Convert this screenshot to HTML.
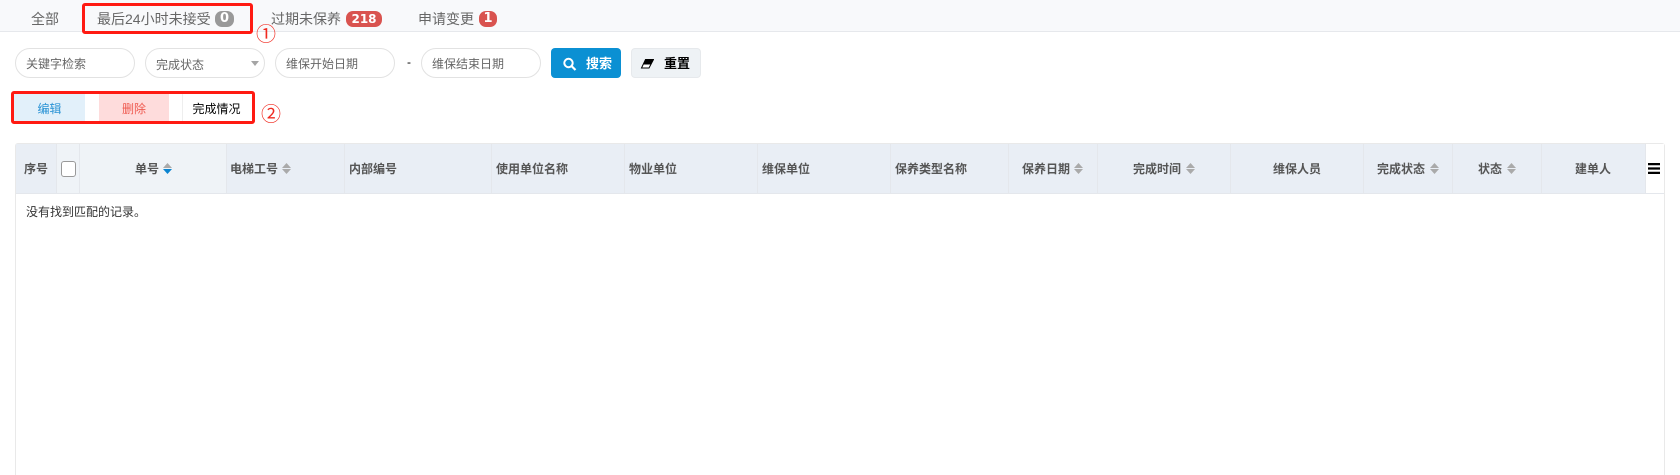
<!DOCTYPE html>
<html lang="zh">
<head>
<meta charset="utf-8">
<title>维保</title>
<style>
html,body{margin:0;padding:0;background:#fff;width:1680px;height:475px;overflow:hidden}
body{position:relative;font-family:"Liberation Sans","WenQuanYi Zen Hei","Noto Sans CJK SC",sans-serif;font-size:12px}
.a{position:absolute;white-space:nowrap}
.tabbar{left:0;top:0;width:1680px;height:31px;background:#f8f9fb;border-bottom:1px solid #e6e8ec}
.tab{font-size:14px;color:#666;line-height:20px;top:9px}
.badge{font-family:"DejaVu Sans",sans-serif;font-weight:bold;color:#fff;font-size:13px;line-height:16px;height:16px;border-radius:7px;text-align:center;top:11px}
.red{position:absolute;border:3px solid #ff1a12;border-radius:3px;box-sizing:border-box}
.circ{color:#f02a20;font-family:"Noto Sans CJK SC",sans-serif;font-size:20px;line-height:22px}
.inp{top:48px;width:120px;height:30px;box-sizing:border-box;border:1px solid #e2e2e2;border-radius:15px;background:#fff}
.ph{color:#666;font-size:12px;line-height:16px;top:56px}
.btn{top:48px;height:30px;box-sizing:border-box;border-radius:4px}
.ac{top:94px;height:27px;line-height:30px;text-align:center;font-size:12px}
.thead{left:16px;top:144px;width:1648px;height:49px;background:#e9eef5}
.tl{top:144px;width:1px;height:49px;background:#e4e7ec}
.th{top:161px;font-size:12px;line-height:16px;font-weight:bold;color:#555}
.s{width:9px;height:11px;top:163px}
</style>
</head>
<body>
<div class="a tabbar"></div>
<div class="a tab" style="left:31px">全部</div>
<div class="a tab" style="left:97px">最后24小时未接受</div>
<div class="a badge" style="left:215px;width:19px;background:#999">0</div>
<div class="a tab" style="left:271px">过期未保养</div>
<div class="a badge" style="left:346px;width:36px;background:#d9534f;font-size:12px">218</div>
<div class="a tab" style="left:418px">申请变更</div>
<div class="a badge" style="left:479px;width:18px;background:#d9534f">1</div>
<div class="red" style="left:82px;top:3px;width:171px;height:31px"></div>
<div class="a circ" style="left:256px;top:22px">①</div>

<div class="a inp" style="left:15px"></div>
<div class="a ph" style="left:26px">关键字检索</div>
<div class="a inp" style="left:145px"></div>
<div class="a ph" style="left:156px;top:57px">完成状态</div>
<div class="a" style="left:251px;top:61px;width:0;height:0;border-left:4px solid transparent;border-right:4px solid transparent;border-top:5px solid #a5a5a5"></div>
<div class="a inp" style="left:275px"></div>
<div class="a ph" style="left:286px">维保开始日期</div>
<div class="a" style="left:407px;top:54px;color:#000;font-size:12px;line-height:16px">-</div>
<div class="a inp" style="left:421px"></div>
<div class="a ph" style="left:432px">维保结束日期</div>

<div class="a btn" style="left:551px;width:70px;background:#0b90d3"></div>
<svg class="a" style="left:562px;top:57px" width="15" height="14" viewBox="0 0 15 14"><circle cx="6.500" cy="6" r="4.200" fill="none" stroke="#fff" stroke-width="2"/><path d="M9.500 9l4 4" stroke="#fff" stroke-width="2.200" fill="none"/></svg>
<div class="a" style="left:586px;top:55px;color:#fff;font-size:13px;line-height:17px;font-weight:bold">搜索</div>
<div class="a btn" style="left:631px;width:70px;background:#eef2f5;border:1px solid #e6e9ec"></div>
<svg class="a" style="left:640px;top:59px" width="14" height="10" viewBox="0 0 14 10"><path d="M5.500 .5h8L9 9H1.500z" fill="#fff" stroke="#000" stroke-width="1"/><path d="M5.500 .5h8L10.800 5.500H3.500z" fill="#000"/></svg>
<div class="a" style="left:664px;top:55px;color:#000;font-size:13px;line-height:17px;font-weight:bold">重置</div>

<div class="a ac" style="left:14px;width:71px;background:#e2f0fa;color:#2a93d5">编辑</div>
<div class="a ac" style="left:99px;width:70px;background:#fedcdc;color:#ef5a50">删除</div>
<div class="a ac" style="left:182px;width:68px;background:#fff;border-left:1px solid #eee;color:#000;box-sizing:border-box">完成情况</div>
<div class="red" style="left:11px;top:91px;width:244px;height:33px"></div>
<div class="a circ" style="left:261px;top:102px">②</div>

<div class="a" style="left:15px;top:143px;width:1650px;height:340px;box-sizing:border-box;border:1px solid #e9e9e9;border-radius:3px;background:#fff"></div>
<div class="a thead"></div>
<div class="a" style="left:56px;top:144px;width:170px;height:49px;background:#eff3f7"></div>
<div class="a" style="left:1646px;top:144px;width:18px;height:49px;background:#fff"></div>
<div class="a" style="left:16px;top:193px;width:1648px;height:1px;background:#e4e7ec"></div>
<div class="a tl" style="left:56px"></div><div class="a tl" style="left:79px"></div><div class="a tl" style="left:226px"></div><div class="a tl" style="left:344px"></div><div class="a tl" style="left:491px"></div><div class="a tl" style="left:624px"></div><div class="a tl" style="left:757px"></div><div class="a tl" style="left:890px"></div><div class="a tl" style="left:1008px"></div><div class="a tl" style="left:1097px"></div><div class="a tl" style="left:1230px"></div><div class="a tl" style="left:1363px"></div><div class="a tl" style="left:1452px"></div><div class="a tl" style="left:1541px"></div><div class="a tl" style="left:1645px"></div>

<div class="a th" style="left:24px">序号</div>
<div class="a" style="left:61px;top:161px;width:15px;height:16px;box-sizing:border-box;border:1.500px solid #999;border-radius:3px;background:#fff"></div>
<div class="a th" style="left:135px">单号</div>
<svg class="a s" style="left:163px" viewBox="0 0 9 11"><path d="M4.500 0L9 5H0z" fill="#aaa"/><path d="M0 6h9L4.500 11z" fill="#0b84d0"/></svg>
<div class="a th" style="left:230px">电梯工号</div>
<svg class="a s" style="left:282px" viewBox="0 0 9 11"><path d="M4.500 0L9 5H0z" fill="#aaa"/><path d="M0 6h9L4.500 11z" fill="#aaa"/></svg>
<div class="a th" style="left:349px">内部编号</div>
<div class="a th" style="left:496px">使用单位名称</div>
<div class="a th" style="left:629px">物业单位</div>
<div class="a th" style="left:762px">维保单位</div>
<div class="a th" style="left:895px">保养类型名称</div>
<div class="a th" style="left:1022px">保养日期</div>
<svg class="a s" style="left:1074px" viewBox="0 0 9 11"><path d="M4.500 0L9 5H0z" fill="#aaa"/><path d="M0 6h9L4.500 11z" fill="#aaa"/></svg>
<div class="a th" style="left:1133px">完成时间</div>
<svg class="a s" style="left:1186px" viewBox="0 0 9 11"><path d="M4.500 0L9 5H0z" fill="#aaa"/><path d="M0 6h9L4.500 11z" fill="#aaa"/></svg>
<div class="a th" style="left:1273px">维保人员</div>
<div class="a th" style="left:1377px">完成状态</div>
<svg class="a s" style="left:1430px" viewBox="0 0 9 11"><path d="M4.500 0L9 5H0z" fill="#aaa"/><path d="M0 6h9L4.500 11z" fill="#aaa"/></svg>
<div class="a th" style="left:1478px">状态</div>
<svg class="a s" style="left:1507px" viewBox="0 0 9 11"><path d="M4.500 0L9 5H0z" fill="#aaa"/><path d="M0 6h9L4.500 11z" fill="#aaa"/></svg>
<div class="a th" style="left:1575px">建单人</div>
<svg class="a" style="left:1648px;top:163px" width="12" height="11" viewBox="0 0 12 11"><path d="M0 0h12v2.200H0zM0 4.400h12v2.200H0zM0 8.800h12v2.200H0z" fill="#000"/></svg>

<div class="a" style="left:26px;top:204px;color:#333;font-size:12px;line-height:16px">没有找到匹配的记录。</div>
</body>
</html>
